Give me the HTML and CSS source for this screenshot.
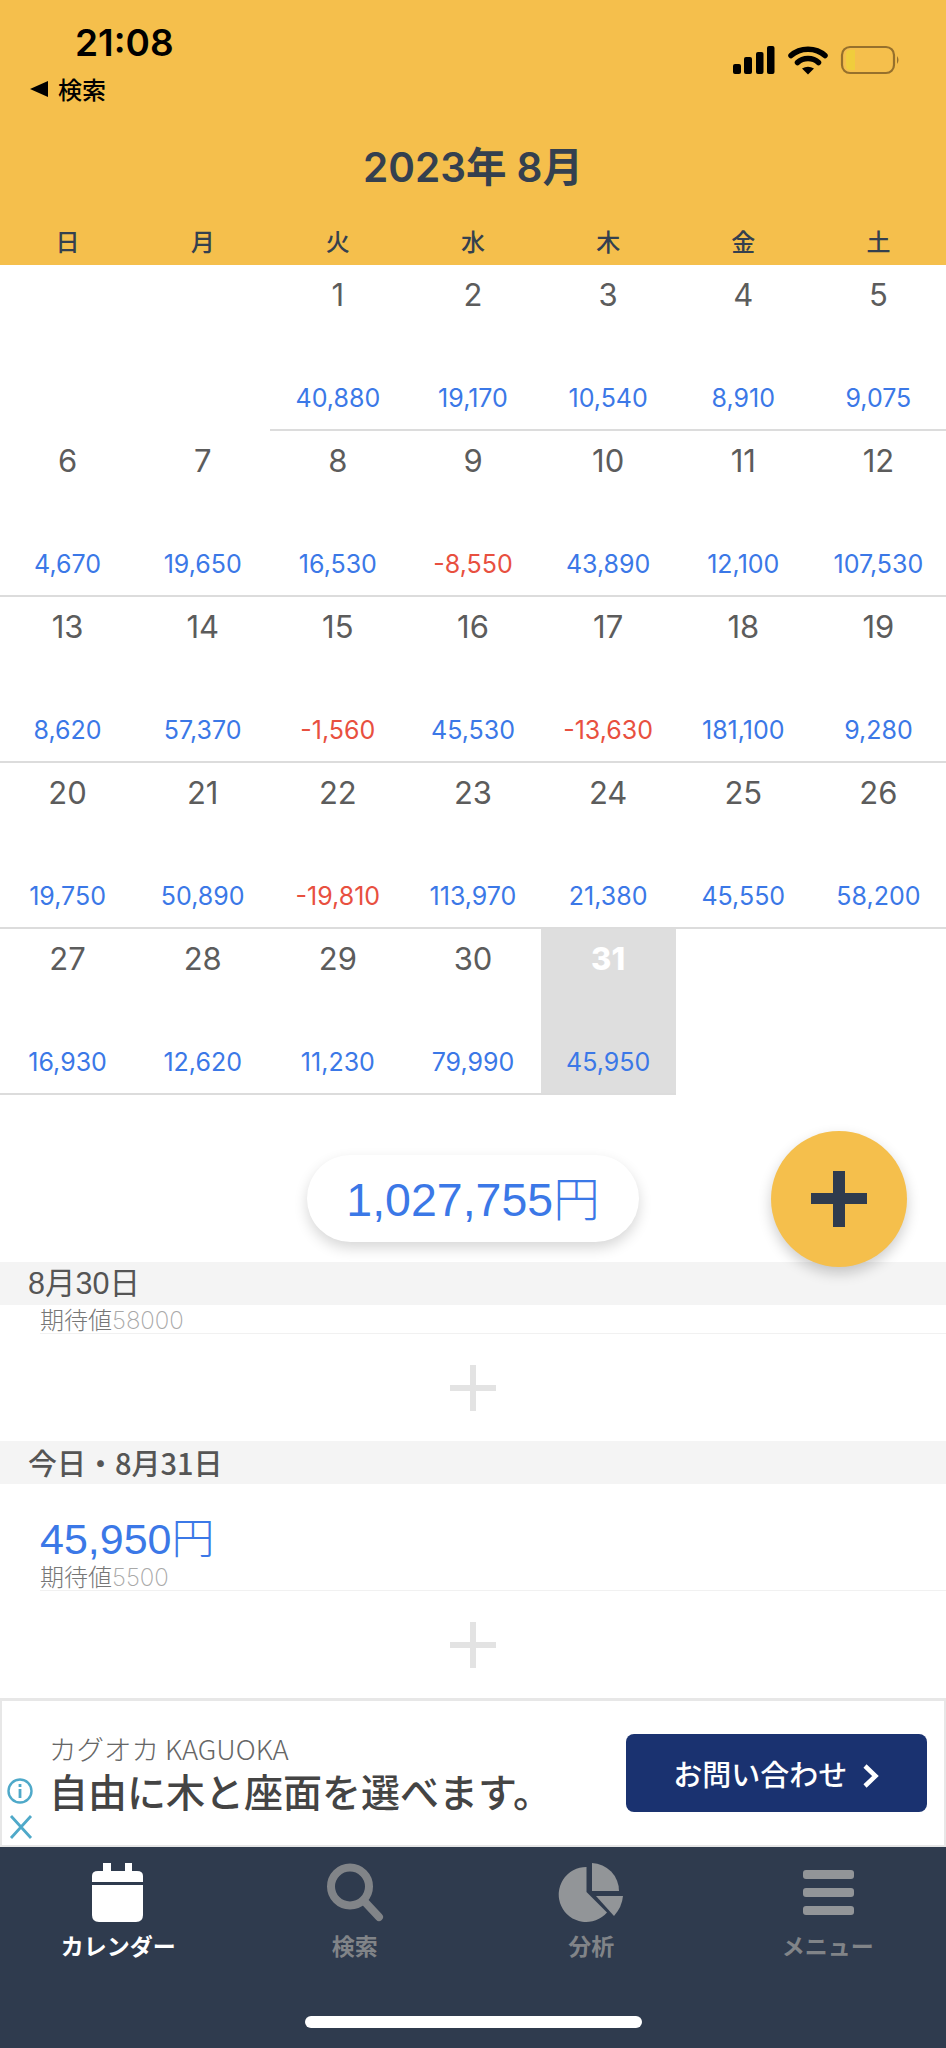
FILE: index.html
```html
<!DOCTYPE html>
<html lang="ja">
<head>
<meta charset="utf-8">
<title>カレンダー</title>
<link rel="stylesheet" href="styles.css">
</head>
<body>
<div class="page">
  <header class="head">
    <div class="status">
      <div class="status-left">
        <div class="time">21:08</div>
        <div class="back"><span class="back-tri"></span>検索</div>
      </div>
      <svg class="status-icons" width="168" height="30" viewBox="0 0 168 30">
        <rect x="0" y="19" width="8" height="10" rx="2" fill="#000"/>
        <rect x="11" y="12" width="8" height="17" rx="2" fill="#000"/>
        <rect x="23" y="7" width="7.5" height="22" rx="2" fill="#000"/>
        <rect x="34" y="1" width="7.5" height="28" rx="2" fill="#000"/>
        <path d="M58 10.5 C67 2 83 2 92 10.5" fill="none" stroke="#000" stroke-width="5.5" stroke-linecap="round"/>
        <path d="M64.5 17.5 C70 12 80 12 85.5 17.5" fill="none" stroke="#000" stroke-width="5.5" stroke-linecap="round"/>
        <path d="M69 23.5 Q75 20 81 23.5 L75 29.5 Z" fill="#000"/>
        <rect x="109" y="2" width="52" height="26" rx="8" fill="none" stroke="#96702c" stroke-width="2.2"/>
        <path d="M117 5 H122 V25 H117 Q113 25 113 21 V9 Q113 5 117 5 Z" fill="#f0cd3c"/>
        <path d="M164 11 Q167 15 164 19 Z" fill="#96702c"/>
      </svg>
    </div>
    <h1 class="month">2023年 8月</h1>
    <div class="weekdays">
      <span>日</span><span>月</span><span>火</span><span>水</span><span>木</span><span>金</span><span>土</span>
    </div>
  </header>

  <section class="calendar">
    <div class="day blank"></div>
    <div class="day blank"></div>
    <div class="day"><span class="num">1</span><span class="amt">40,880</span></div>
    <div class="day"><span class="num">2</span><span class="amt">19,170</span></div>
    <div class="day"><span class="num">3</span><span class="amt">10,540</span></div>
    <div class="day"><span class="num">4</span><span class="amt">8,910</span></div>
    <div class="day"><span class="num">5</span><span class="amt">9,075</span></div>

    <div class="day"><span class="num">6</span><span class="amt">4,670</span></div>
    <div class="day"><span class="num">7</span><span class="amt">19,650</span></div>
    <div class="day"><span class="num">8</span><span class="amt">16,530</span></div>
    <div class="day"><span class="num">9</span><span class="amt neg">-8,550</span></div>
    <div class="day"><span class="num">10</span><span class="amt">43,890</span></div>
    <div class="day"><span class="num">11</span><span class="amt">12,100</span></div>
    <div class="day"><span class="num">12</span><span class="amt">107,530</span></div>

    <div class="day"><span class="num">13</span><span class="amt">8,620</span></div>
    <div class="day"><span class="num">14</span><span class="amt">57,370</span></div>
    <div class="day"><span class="num">15</span><span class="amt neg">-1,560</span></div>
    <div class="day"><span class="num">16</span><span class="amt">45,530</span></div>
    <div class="day"><span class="num">17</span><span class="amt neg">-13,630</span></div>
    <div class="day"><span class="num">18</span><span class="amt">181,100</span></div>
    <div class="day"><span class="num">19</span><span class="amt">9,280</span></div>

    <div class="day"><span class="num">20</span><span class="amt">19,750</span></div>
    <div class="day"><span class="num">21</span><span class="amt">50,890</span></div>
    <div class="day"><span class="num">22</span><span class="amt neg">-19,810</span></div>
    <div class="day"><span class="num">23</span><span class="amt">113,970</span></div>
    <div class="day"><span class="num">24</span><span class="amt">21,380</span></div>
    <div class="day"><span class="num">25</span><span class="amt">45,550</span></div>
    <div class="day"><span class="num">26</span><span class="amt">58,200</span></div>

    <div class="day"><span class="num">27</span><span class="amt">16,930</span></div>
    <div class="day"><span class="num">28</span><span class="amt">12,620</span></div>
    <div class="day"><span class="num">29</span><span class="amt">11,230</span></div>
    <div class="day"><span class="num">30</span><span class="amt">79,990</span></div>
    <div class="day today"><span class="num">31</span><span class="amt">45,950</span></div>
    <div class="day blank"></div>
    <div class="day blank"></div>
  </section>

  <section class="summary">
    <div class="total">1,027,755<span class="yen">円</span></div>
  </section>

  <section class="log">
    <div class="log-head">8月30日</div>
    <div class="log-entry compact"><div class="expect">期待値<span class="expect-num">58000</span></div></div>
    <div class="add add-first"><span class="add-plus"></span></div>
    <div class="log-head bold">今日・8月31日</div>
    <div class="log-entry">
      <div class="log-amt">45,950<span class="yen">円</span></div>
      <div class="expect">期待値<span class="expect-num">5500</span></div>
    </div>
    <div class="add"><span class="add-plus"></span></div>
  </section>

  <aside class="ad">
    <div class="ad-side">
      <svg class="ad-info" width="26" height="26" viewBox="0 0 26 26">
        <circle cx="13" cy="13" r="11.5" fill="none" stroke="#4fa9c9" stroke-width="2.4"/>
        <rect x="11.6" y="11" width="2.8" height="9" fill="#4fa9c9"/>
        <rect x="11.6" y="6" width="2.8" height="3" fill="#4fa9c9"/>
      </svg>
      <svg class="ad-close" width="24" height="24" viewBox="0 0 24 24">
        <path d="M2 1 L22 23 M22 1 L2 23" fill="none" stroke="#4fa9c9" stroke-width="2.8"/>
      </svg>
    </div>
    <div class="ad-text">
      <div class="ad-brand">カグオカ KAGUOKA</div>
      <div class="ad-title">自由に木と座面を選べます。</div>
    </div>
    <div class="ad-btn">お問い合わせ
      <svg class="ad-chev" width="18" height="24" viewBox="0 0 18 24"><path d="M3 2 L13.5 12 L3 22" fill="none" stroke="#fff" stroke-width="4.5"/></svg>
    </div>
  </aside>

  <nav class="tabs">
    <div class="tab active">
      <svg class="tab-icon" width="60" height="62" viewBox="0 0 60 62">
        <path d="M15 1 H23 V9 H37 V1 H44 V9 H49 Q55 9 55 14 V20 H4 V14 Q4 9 10 9 H15 Z" fill="#fff"/>
        <path d="M4 23 H55 V53 Q55 60 48 60 H11 Q4 60 4 53 Z" fill="#fff"/>
      </svg>
      <span class="tab-label">カレンダー</span>
    </div>
    <div class="tab">
      <svg class="tab-icon" width="60" height="62" viewBox="0 0 60 62">
        <circle cx="25" cy="24.5" r="19" fill="none" stroke="#818488" stroke-width="8"/>
        <path d="M40 40 L54 55" fill="none" stroke="#818488" stroke-width="8" stroke-linecap="round"/>
      </svg>
      <span class="tab-label">検索</span>
    </div>
    <div class="tab">
      <svg class="tab-icon" width="70" height="62" viewBox="-5 0 70 62">
        <path d="M25.5 5 A27.5 27.5 0 1 0 46 50.5 L25.5 30 Z" fill="#929598"/>
        <path d="M31 1 A28 28 0 0 1 58 29 H31 Z" fill="#929598"/>
        <path d="M35 34 H62 Q61 45 53 54 Z" fill="#929598"/>
      </svg>
      <span class="tab-label">分析</span>
    </div>
    <div class="tab">
      <svg class="tab-icon" width="60" height="62" viewBox="0 0 60 62">
        <rect x="5" y="8" width="51" height="9" rx="3" fill="#929598"/>
        <rect x="5" y="26" width="51" height="9" rx="3" fill="#929598"/>
        <rect x="5" y="44" width="51" height="9" rx="3" fill="#929598"/>
      </svg>
      <span class="tab-label">メニュー</span>
    </div>
    <div class="home-bar"></div>
  </nav>

  <button class="fab" aria-label="追加"><span class="fab-plus"></span></button>
</div>
</body>
</html>
```
FILE: styles.css
```css
* { box-sizing: border-box; }
html, body { margin: 0; padding: 0; background: #fff; }
body { font-family: "Liberation Sans", "Noto Sans CJK JP", sans-serif; }
.page {
  position: relative;
  width: 946px;
  height: 2048px;
  overflow: hidden;
  display: flex;
  flex-direction: column;
}

/* Header */
.head {
  height: 265px;
  background: #f5bf4c;
  color: #34404f;
  display: flex;
  flex-direction: column;
}
.status {
  height: 120px;
  display: flex;
  justify-content: space-between;
  padding: 0 45px 0 30px;
  color: #000;
}
.status-left { display: flex; flex-direction: column; }
.time {
  margin: 22px 0 0 45px;
  font: 600 37px/42px Inter, sans-serif;
}
.back {
  display: flex;
  align-items: center;
  margin-top: 9px;
  font: 500 24px/32px "Noto Sans CJK JP", sans-serif;
}
.back-tri {
  width: 0;
  height: 0;
  margin-right: 10px;
  border-style: solid;
  border-width: 8.5px 18px 8.5px 0;
  border-color: transparent #000 transparent transparent;
}
.status-icons { margin-top: 45px; }
.month {
  margin: 22px 0 0;
  text-align: center;
  font: 600 40.5px/52px Inter, "Noto Sans CJK JP", sans-serif;
}
.weekdays {
  margin-top: 31px;
  display: grid;
  grid-template-columns: repeat(7, 1fr);
  text-align: center;
  font: 500 24px/32px "Noto Sans CJK JP", sans-serif;
}

/* Calendar */
.calendar {
  display: grid;
  grid-template-columns: repeat(7, 1fr);
  grid-auto-rows: 166px;
  font-family: Inter, sans-serif;
}
.day {
  display: flex;
  flex-direction: column;
  align-items: center;
  border-bottom: 2.5px solid #dcdcdc;
}
.day.blank { border-bottom: 0; }
.num {
  margin-top: 9px;
  font-size: 31px;
  line-height: 42px;
  color: #5c5c5c;
}
.amt {
  margin-top: auto;
  margin-bottom: 15px;
  font-size: 25px;
  line-height: 32px;
  color: #3b78e7;
}
.amt.neg { color: #e8503f; }
.today { background: #dedede; }
.today .num { color: #fff; font-weight: 800; }

/* Summary */
.summary {
  height: 167px;
  display: flex;
  justify-content: center;
  padding-top: 60px;
}
.total {
  width: 332px;
  height: 87px;
  border-radius: 44px;
  background: #fff;
  box-shadow: 0 6px 14px rgba(0, 0, 0, .16);
  text-align: center;
  font-size: 46.5px;
  line-height: 81px;
  color: #3b78e7;
}
.yen { font-family: "Noto Sans CJK JP", sans-serif; font-weight: 300; }
.fab {
  position: absolute;
  left: 771px;
  top: 1131px;
  width: 136px;
  height: 136px;
  border: 0;
  border-radius: 50%;
  background: #f5bf4c;
  box-shadow: 0 6px 14px rgba(0, 0, 0, .2);
  display: flex;
  align-items: center;
  justify-content: center;
}
.fab-plus, .add-plus { position: relative; display: block; }
.fab-plus { width: 56px; height: 56px; }
.fab-plus::before, .fab-plus::after, .add-plus::before, .add-plus::after {
  content: "";
  position: absolute;
}
.fab-plus::before { left: 22px; top: 0; width: 12px; height: 56px; background: #2f3b4e; }
.fab-plus::after { left: 0; top: 22px; width: 56px; height: 11px; background: #2f3b4e; }

/* Log */
.log { height: 436px; }
.log-head {
  height: 43px;
  padding-left: 28px;
  background: #f4f4f4;
  color: #555;
  font-size: 30.5px;
  line-height: 43px;
}
.log-head.bold { font-weight: 500; font-family: "Noto Sans CJK JP", sans-serif; font-size: 29px; }
.log-entry {
  margin-left: 40px;
  height: 107px;
  border-bottom: 1px solid #f1f1f1;
  display: flex;
  flex-direction: column;
  justify-content: flex-end;
}
.log-entry.compact { height: 29px; }
.log-amt {
  font-size: 43px;
  line-height: 50px;
  color: #3b78e7;
}
.expect {
  font-family: "Noto Sans CJK JP", sans-serif;
  font-size: 24px;
  line-height: 24px;
  color: #777;
  font-weight: 300;
}
.expect-num { font-family: Inter, sans-serif; font-weight: 200; color: #a8a8a8; }
.add {
  height: 107px;
  display: flex;
  align-items: center;
  justify-content: center;
}
.add-plus { width: 46px; height: 46px; }
.add-plus::before { left: 20px; top: 0; width: 6px; height: 46px; background: #e3e3e3; }
.add-plus::after { left: 0; top: 20px; width: 46px; height: 6px; background: #e3e3e3; }

/* Ad */
.ad {
  height: 149px;
  border: 2px solid #e7e7e7;
  border-top-width: 3px;
  display: flex;
  align-items: flex-start;
  background: #fff;
}
.ad-side {
  width: 47px;
  padding: 77px 0 0 5px;
  display: flex;
  flex-direction: column;
  gap: 11px;
}
.ad-info, .ad-close { display: block; flex: none; }
.ad-close { margin-left: 2px; }
.ad-text { flex: 1; padding-top: 30px; }
.ad-brand {
  font: 300 27.5px/34px "Noto Sans CJK JP", sans-serif;
  color: #666;
}
.ad-title {
  font: 500 39px/50px "Noto Sans CJK JP", sans-serif;
  color: #444;
}
.ad-btn {
  width: 301px;
  height: 78px;
  margin: 33px 17px 0 0;
  border-radius: 8px;
  background: #1a3270;
  color: #fff;
  font: 500 29px/78px "Noto Sans CJK JP", sans-serif;
  text-align: center;
  white-space: nowrap;
}
.ad-chev { margin-left: 8px; vertical-align: -2px; }

/* Tabs */
.tabs {
  position: relative;
  flex: 1;
  background: #2f3b4e;
  display: grid;
  grid-template-columns: repeat(4, 1fr);
  align-content: start;
  padding-top: 15px;
}
.tab {
  display: flex;
  flex-direction: column;
  align-items: center;
  color: #818488;
}
.tab.active { color: #fff; }
.tab-icon { display: block; }
.tab-label {
  margin-top: 5px;
  font: 700 23px/32px "Noto Sans CJK JP", sans-serif;
}
.home-bar {
  position: absolute;
  left: 305px;
  top: 169px;
  width: 337px;
  height: 12px;
  border-radius: 6px;
  background: #fff;
}
```
